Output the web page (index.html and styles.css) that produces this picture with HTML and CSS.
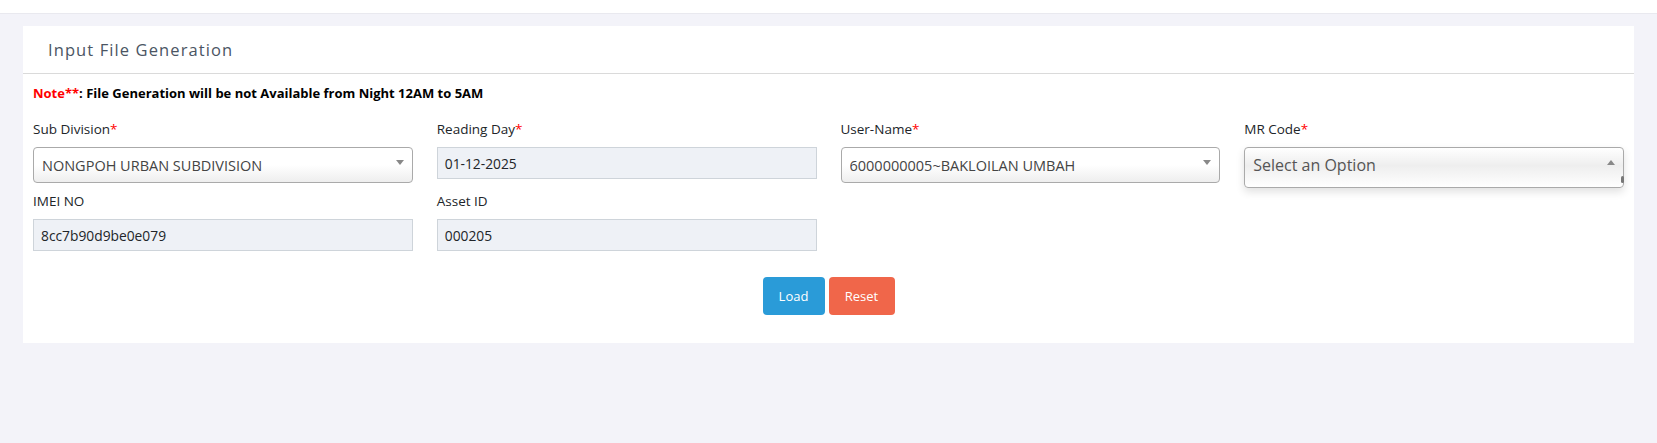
FILE: index.html
```html
<!DOCTYPE html>
<html lang="en">
<head>
<meta charset="utf-8">
<title>Input File Generation</title>
<link rel="stylesheet" href="styles.css">
</head>
<body>
<div class="topbar"></div>
<main class="page">
  <section class="card">
    <header class="card-header">
      <h4 class="card-title">Input File Generation</h4>
    </header>
    <div class="card-body">
      <p class="note"><span class="req">Note**</span>: File Generation will be not Available from Night 12AM to 5AM</p>
      <div class="grid">
        <div class="field">
          <label class="label">Sub Division<span class="req">*</span></label>
          <div class="select"><span class="select-text">NONGPOH URBAN SUBDIVISION</span><span class="arrow"></span></div>
        </div>
        <div class="field">
          <label class="label">Reading Day<span class="req">*</span></label>
          <div class="input">01-12-2025</div>
        </div>
        <div class="field">
          <label class="label">User-Name<span class="req">*</span></label>
          <div class="select"><span class="select-text">6000000005~BAKLOILAN UMBAH</span><span class="arrow"></span></div>
        </div>
        <div class="field">
          <label class="label">MR Code<span class="req">*</span></label>
          <div class="select select-open"><span class="select-text placeholder">Select an Option</span><span class="arrow arrow-up"></span><span class="scroll-nub"></span></div>
        </div>
        <div class="field">
          <label class="label">IMEI NO</label>
          <div class="input">8cc7b90d9be0e079</div>
        </div>
        <div class="field">
          <label class="label">Asset ID</label>
          <div class="input">000205</div>
        </div>
      </div>
      <div class="actions">
        <button class="btn btn-load" type="button">Load</button>
        <button class="btn btn-reset" type="button">Reset</button>
      </div>
    </div>
  </section>
</main>
</body>
</html>
```

FILE: styles.css
```css
* { box-sizing: border-box; }

html, body {
  margin: 0;
  padding: 0;
}

body {
  background: #f3f3f9;
  font-family: "Open Sans", "Noto Sans", sans-serif;
  color: #212529;
  min-height: 443px;
}

.topbar {
  height: 14px;
  background: #ffffff;
  border-bottom: 1px solid #e9e9ef;
}

.page {
  padding: 12px 23px 0 23px;
}

.card {
  background: #ffffff;
}

.card-header {
  height: 48px;
  border-bottom: 1px solid #dadada;
  display: flex;
  align-items: center;
  padding: 0 25px;
}

.card-title {
  margin: 0;
  font-size: 16.5px;
  font-weight: 400;
  letter-spacing: 1.1px;
  color: #4b5563;
}

.card-body {
  padding: 9px 10px 28px 10px;
}

.note {
  margin: 0 0 16px 0;
  font-size: 13px;
  line-height: 20px;
  font-weight: 700;
  color: #000000;
}

.req {
  color: #ff0000;
}

.grid {
  display: grid;
  grid-template-columns: repeat(4, 1fr);
  column-gap: 24px;
  row-gap: 8px;
  align-items: start;
}

.field {
  display: flex;
  flex-direction: column;
}

.label {
  font-size: 13.5px;
  line-height: 20px;
  font-weight: 500;
  color: #212529;
  margin-bottom: 8px;
}

.select {
  position: relative;
  height: 36px;
  border: 1px solid #aaaaaa;
  border-radius: 4px;
  background: linear-gradient(to bottom, #ffffff 50%, #eeeeee 100%);
  display: flex;
  align-items: center;
  padding: 0 24px 0 8px;
}

.select-text {
  font-size: 14.5px;
  color: #444444;
  white-space: nowrap;
  overflow: hidden;
}

.select-text.placeholder {
  font-size: 16px;
  color: #555555;
}

.select-open {
  height: 41px;
  margin-bottom: -5px;
  align-items: flex-start;
  padding-top: 6px;
  background: linear-gradient(to bottom, #ffffff 0%, #eeeeee 45%, #ffffff 100%);
  box-shadow: 0 4px 8px rgba(0, 0, 0, 0.12);
}

.arrow {
  position: absolute;
  top: 12px;
  right: 8px;
  width: 0;
  height: 0;
  border-style: solid;
  border-width: 5px 4px 0 4px;
  border-color: #888888 transparent transparent transparent;
}

.arrow-up {
  border-width: 0 4px 5px 4px;
  border-color: transparent transparent #888888 transparent;
}

.scroll-nub {
  position: absolute;
  right: -1px;
  top: 28px;
  width: 3px;
  height: 7px;
  border-radius: 2px;
  background: #777777;
}

.input {
  height: 32px;
  border: 1px solid #ced4da;
  background: #eef1f6;
  display: flex;
  align-items: center;
  padding: 0 7px;
  font-size: 13.8px;
  color: #212529;
}

.actions {
  display: flex;
  justify-content: center;
  gap: 4px;
  margin-top: 26px;
}

.btn {
  height: 38px;
  border: none;
  border-radius: 4px;
  color: #ffffff;
  font-family: "Open Sans", "Noto Sans", sans-serif;
  font-size: 13px;
  padding: 0 14px;
  cursor: pointer;
}

.btn-load {
  background: #2a9bd8;
  width: 62px;
}

.btn-reset {
  background: #f0664a;
  width: 66px;
}
```
